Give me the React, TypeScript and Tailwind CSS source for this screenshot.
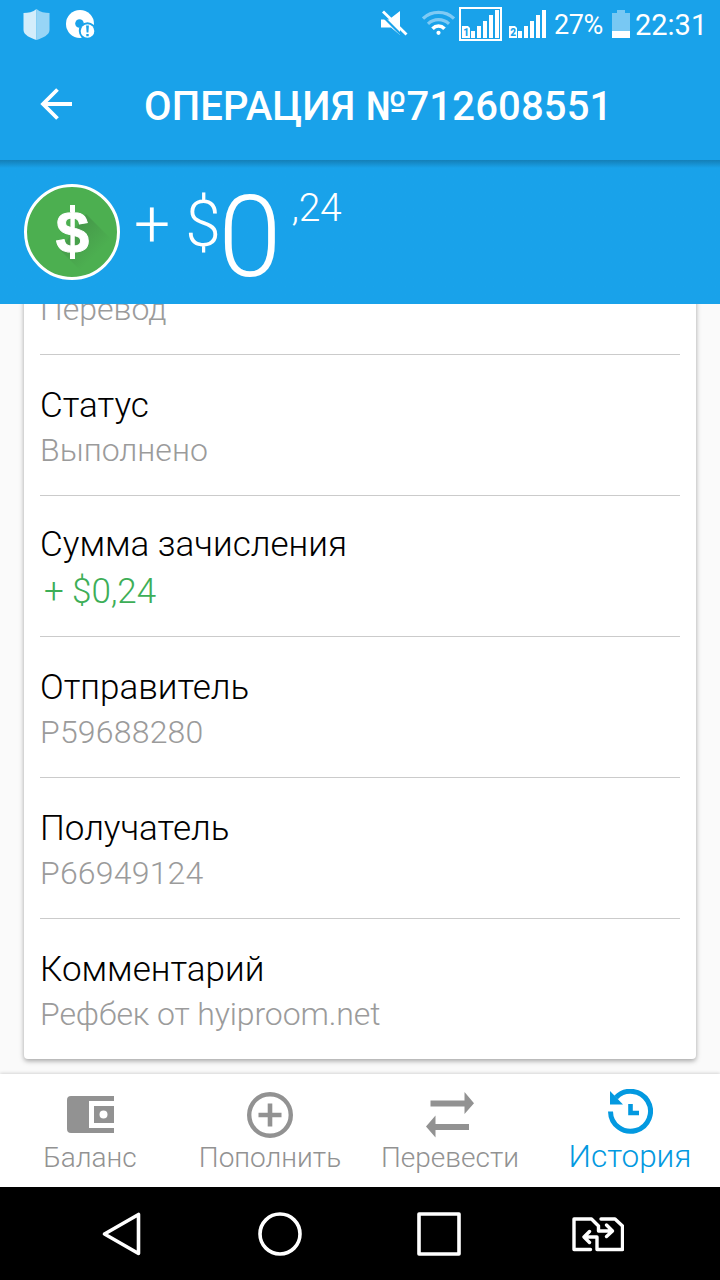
import React from "react";

interface Detail {
  label: string;
  value: string;
  kind?: "income" | "wallet" | "comment";
}

const details: Detail[] = [
  { label: "Статус", value: "Выполнено" },
  { label: "Сумма зачисления", value: "+ $0,24", kind: "income" },
  { label: "Отправитель", value: "P59688280", kind: "wallet" },
  { label: "Получатель", value: "P66949124", kind: "wallet" },
  { label: "Комментарий", value: "Рефбек от hyiproom.net", kind: "comment" },
];

const valueStyles = {
  income: "mt-[5px] pl-[4px] text-[35px] leading-[42px] tracking-[-0.1px] text-[#3dae57]",
  wallet: "mt-[4px] text-[32px] leading-[38px] tracking-[0.2px] text-[#9b9b9b]",
  comment: "mt-[4px] text-[32px] leading-[38px] tracking-[-0.12px] text-[#9b9b9b]",
  plain: "mt-[4px] text-[32px] leading-[38px] text-[#9b9b9b]",
};

function SignalBars({ sim }: { sim: string }) {
  return (
    <svg width="37" height="29" viewBox="0 0 37 29" fill="#fff">
      <path d="M0 28V16h6l2 2v10z" />
      <text x="1.2" y="26.3" fontSize="10" fontWeight="900" fill="#19a2ea" fontFamily="Roboto">
        {sim}
      </text>
      <path d="M9 21h4v7H9zM15 16h4v12h-4zM21 11h4v17h-4zM27 5h4v23h-4zM33 0h4v28h-4z" />
    </svg>
  );
}

function StatusBar() {
  return (
    <div className="flex h-[50px] items-start pl-[23px] pr-[15px] text-white">
      <svg className="mt-[8px]" width="27" height="33" viewBox="0 0 27 33">
        <path d="M13.5 1C10 4 5 5 .5 5v17c0 5 7 8 13 10z" fill="#d3edfb" />
        <path d="M13.5 1C17 4 22 5 26.5 5v17c0 5-7 8-13 10z" fill="#97d5f6" />
      </svg>
      <svg className="ml-[16px] mt-[9px]" width="29" height="30" viewBox="0 0 29 30">
        <circle cx="14" cy="15" r="14" fill="#fff" />
        <circle cx="13.5" cy="14.5" r="4.3" fill="#19a2ea" />
        <circle cx="21.5" cy="22" r="8.7" fill="#19a2ea" />
        <circle cx="21.5" cy="22" r="6.8" fill="#fff" />
        <path d="M20.1 16.5h2.800l-.5 7h-1.800zM20.300 25h2.400v2.300h-2.400z" fill="#19a2ea" />
      </svg>

      <svg className="ml-auto mt-[10px]" width="28" height="26" viewBox="0 0 28 26">
        <path d="M1 9.5h8L20 1v24l-9-7.500H1z" fill="#fff" />
        <path d="M0 3.5 22.5 26" stroke="#19a2ea" strokeWidth="2.2" />
        <path d="M3 1.5 26.5 24.5" stroke="#fff" strokeWidth="2.8" />
      </svg>
      <svg className="ml-[14px] mt-[10px]" width="33" height="25" viewBox="0 0 33 25" fill="none" strokeWidth="3.2">
        <path d="M1 8.5C9.5 .3 23.5 .3 32 8.5" stroke="#7fcaf4" />
        <path d="M6 13.8C12 8.2 21 8.2 27 13.8" stroke="#7fcaf4" />
        <path d="M10.5 18.7c3.5-3.6 8.5-3.6 12 0" stroke="#fff" strokeWidth="3.6" />
        <circle cx="16.5" cy="22.8" r="2.1" fill="#fff" />
      </svg>
      <div className="ml-[4px] mt-[7px] flex h-[34px] w-[43px] justify-center border-2 border-white pt-px">
        <SignalBars sim="1" />
      </div>
      <div className="ml-[7px] mt-[10px]">
        <SignalBars sim="2" />
      </div>
      <span className="ml-[8px] mt-[9px] w-[48px] text-[27px] leading-[32px] tracking-[-0.4px]">27%</span>
      <svg className="ml-[10px] mt-[10px]" width="18" height="28" viewBox="0 0 18 28">
        <path d="M5 0h8v3h5v18H0V3h5z" fill="#78c8f3" />
        <path d="M0 21h18v7H0z" fill="#fff" />
      </svg>
      <span className="ml-[5px] mt-[8px] w-[70px] text-[29px] leading-[34px]">22:31</span>
    </div>
  );
}

function DollarBadge() {
  return (
    <svg className="mt-[24px] shrink-0" width="96" height="96" viewBox="0 0 96 96">
      <defs>
        <linearGradient id="dollarShade" x1="50" y1="48" x2="78" y2="76" gradientUnits="userSpaceOnUse">
          <stop offset="0" stopColor="#469a4a" />
          <stop offset="0.8" stopColor="#4caf50" />
        </linearGradient>
      </defs>
      <circle cx="48" cy="48" r="46.5" fill="#4caf50" stroke="#fff" strokeWidth="3" />
      <path d="M62 30 91 59A45 45 0 0 1 60 90L36 66z" fill="url(#dollarShade)" />
      <text
        x="48.5"
        y="68.5"
        textAnchor="middle"
        fontFamily="Liberation Sans"
        fontWeight="700"
        fontSize="60"
        fill="#fff"
        stroke="#fff"
        strokeWidth="1"
      >
        $
      </text>
      <path d="M46 21h5v7h-5zM46 67h5v8h-5z" fill="#fff" />
    </svg>
  );
}

function NavItem({ label, children, active }: { label: string; children: React.ReactNode; active?: boolean }) {
  return (
    <button
      className={
        active
          ? "flex w-[180px] flex-col items-center font-light text-[#0399e0]"
          : "flex w-[180px] flex-col items-center font-light text-[#929292]"
      }
    >
      <span className="flex h-[66px] items-center justify-center">{children}</span>
      <span className={active ? "text-[31.5px] leading-[34px]" : "mt-px text-[28px] leading-[34px]"}>{label}</span>
    </button>
  );
}

export default function App() {
  return (
    <div className="flex h-[1280px] w-[720px] flex-col overflow-hidden bg-[#fafafa] font-[Roboto,sans-serif]">
      {/* Header */}
      <header className="h-[160px] shrink-0 bg-[#19a2ea]">
        <StatusBar />
        <div className="flex h-[110px] items-center pl-[40px] text-white">
          <svg className="mb-[2px]" width="32" height="32" viewBox="0 0 32 32" fill="none" stroke="#fff" strokeWidth="3.8">
            <path d="M32 16H3M17.5 1.5 3 16l14.5 14.5" />
          </svg>
          <h1 className="ml-[72px] mt-[3px] text-[40px] font-medium leading-[47px] tracking-[0.15px]">ОПЕРАЦИЯ №712608551</h1>
        </div>
      </header>

      {/* Amount */}
      <section className="flex h-[144px] shrink-0 items-start bg-[#19a2ea] bg-linear-to-b from-[#147fb7] to-[#19a2ea] to-[8px] pl-[24px] font-light text-white">
        <DollarBadge />
        <span className="ml-[14px] mt-[27px] text-[64px] leading-[75px] tracking-[-0.3px]">+ $</span>
        <span className="-ml-[2px] mt-[10px] text-[114px] leading-[134px]">0</span>
        <span className="ml-[10px] mt-[25px] text-[39px] leading-[47px] tracking-[-0.4px]">,24</span>
      </section>

      {/* Details card, scrolled to its end */}
      <main className="flex h-[770px] shrink-0 flex-col justify-end overflow-hidden px-[24px] pb-[15px]">
        <div className="rounded-[4px] bg-white px-[16px] font-light shadow-[0_2px_5px_rgba(0,0,0,0.35)]">
          <div className="flex h-[70px] items-end pb-[26px] text-[32px] leading-[38px] text-[#9b9b9b]">Перевод</div>
          {details.map((item) => (
            <div key={item.label} className="h-[141px] border-t border-[#cbcbcb]">
              <p
                className={
                  item.kind === "income"
                    ? "pt-[28px] text-[35px] leading-[42px] text-black"
                    : "pt-[30px] text-[35px] leading-[42px] text-black"
                }
              >
                {item.label}
              </p>
              <p className={valueStyles[item.kind ?? "plain"]}>{item.value}</p>
            </div>
          ))}
        </div>
      </main>

      {/* Tabs */}
      <nav className="flex h-[113px] shrink-0 bg-white shadow-[0_-1px_3px_rgba(0,0,0,0.15)]">
        <NavItem label="Баланс">
          <svg className="ml-[1px] mt-[14px]" width="47" height="37" viewBox="0 0 47 37" fill="#929292">
            <path d="M4 0h43v5H22v27h25v5H4a4 4 0 0 1-4-4V4a4 4 0 0 1 4-4z" />
            <path fillRule="evenodd" d="M27 10h20v17H27zM36.5 14.5a4 4 0 1 0 0 8 4 4 0 0 0 0-8z" />
          </svg>
        </NavItem>
        <NavItem label="Пополнить">
          <svg className="mt-[15px]" width="46" height="46" viewBox="0 0 46 46" fill="none" stroke="#929292">
            <circle cx="23" cy="23" r="20.8" strokeWidth="4.4" />
            <path d="M23 11.5v23M11.5 23h23" strokeWidth="4.6" />
          </svg>
        </NavItem>
        <NavItem label="Перевести">
          <svg className="mt-[15px]" width="48" height="46" viewBox="0 0 48 46" fill="#929292">
            <path d="M4.5 8.5h34V0L48 11.2 38.5 22v-7.500h-34zM43 32H9.500v-8.500L0 34.500l9.500 11V38H43z" />
          </svg>
        </NavItem>
        <NavItem label="История" active>
          <svg className="mt-[8px]" width="45" height="45" viewBox="0 0 45 45">
            <path d="M2.5 22.5A20 20 0 1 0 8 8.5" fill="none" stroke="#0399e0" strokeWidth="5" />
            <path d="M2 2v13.5h13z" fill="#0399e0" />
            <path d="M22.5 15v9H31" fill="none" stroke="#0399e0" strokeWidth="4.6" />
          </svg>
        </NavItem>
      </nav>

      {/* System buttons */}
      <footer className="flex h-[93px] shrink-0 items-center bg-black pl-[102px]">
        <svg width="39" height="44" viewBox="0 0 39 44" fill="none" stroke="#fff" strokeWidth="3.6">
          <path d="M2.5 22 36.5 2.5v39z" strokeLinejoin="round" />
        </svg>
        <svg className="ml-[117px]" width="44" height="44" viewBox="0 0 44 44" fill="none" stroke="#fff" strokeWidth="3.6">
          <circle cx="22" cy="22" r="20" />
        </svg>
        <svg className="ml-[115px]" width="44" height="44" viewBox="0 0 44 44" fill="none" stroke="#fff" strokeWidth="3.6">
          <path d="M2 2h40v40H2z" strokeLinejoin="round" />
        </svg>
        <svg className="ml-[111px]" width="52" height="36" viewBox="0 0 52 36" fill="none" stroke="#fff" strokeWidth="3.4" strokeLinecap="round" strokeLinejoin="round">
          <path d="M18.5 33.5H2V3h17.500l7 7v5H40M34.500 9l6 6-6 5.500" />
          <path d="M29 3h14l7.500 7v23.500H25V21H12.500M17.500 15.500l-5.500 5.500 5.500 5.500" />
        </svg>
      </footer>
    </div>
  );
}
